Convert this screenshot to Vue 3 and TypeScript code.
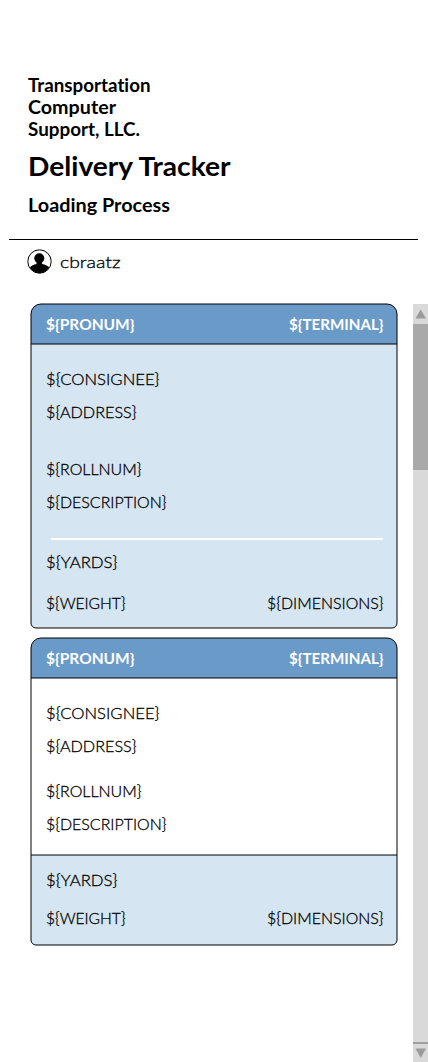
<script setup lang="ts">
import { h } from 'vue'

interface LabelProps {
  text: string
  w: number
}

interface Card {
  id: string
  kind: 'plain' | 'split'
  height: number
  sectionY: number
}

// Fixed-measure text label: 20px tall, baseline at 15px.
const FitLabel = (props: LabelProps) =>
  h('svg', { width: props.w, height: 20, overflow: 'visible', style: 'display:block' }, [
    h(
      'text',
      { x: 0, y: 15, textLength: props.w, lengthAdjust: 'spacingAndGlyphs', fill: 'currentColor' },
      props.text,
    ),
  ])
FitLabel.props = ['text', 'w']

const cards: Card[] = [
  { id: 'first', kind: 'plain', height: 326, sectionY: 0 },
  { id: 'second', kind: 'split', height: 309, sectionY: 218 },
]

function outline(height: number): string {
  const b = height - 1
  return `M1 11a10 10 0 0 1 10-10H357a10 10 0 0 1 10 10V${b - 5}a5 5 0 0 1-5 5H6a5 5 0 0 1-5-5Z`
}

function section(y: number, height: number): string {
  const b = height - 1
  return `M1 ${y}H367V${b - 5}a5 5 0 0 1-5 5H6a5 5 0 0 1-5-5Z`
}
</script>

<template>
  <div class="page">
    <header class="top">
      <FitLabel class="brand" text="Transportation" :w="122.5" />
      <FitLabel class="brand" text="Computer" :w="88" />
      <FitLabel class="brand" text="Support, LLC." :w="112" />
      <FitLabel class="title" text="Delivery Tracker" :w="202.5" />
      <FitLabel class="brand process" text="Loading Process" :w="142" />
    </header>
    <div class="rule"></div>
    <div class="user">
      <svg width="26" height="26" viewBox="0 0 26 26">
        <circle cx="12.5" cy="12.5" r="11.7" fill="#fff" stroke="#000" />
        <circle cx="12.3" cy="9.3" r="5" />
        <path d="M9.5 12h5.600v3c2.800.6 5.500 1.700 7 3.300-2 3.700-5.500 5.900-9.600 5.900S5 22 3 18.300c1.300-1.600 3.800-2.700 6.500-3.300Z" />
      </svg>
      <FitLabel class="name" text="cbraatz" :w="60.5" />
    </div>

    <main class="content">
      <div class="cards">
        <article v-for="c in cards" :key="c.id" class="card" :class="c.kind">
          <svg class="frame" width="368" :height="c.height">
            <path :d="outline(c.height)" :fill="c.kind === 'plain' ? '#d5e5f1' : '#fff'" />
            <path v-if="c.sectionY" :d="section(c.sectionY, c.height)" fill="#d5e5f1" />
            <path d="M1 41V11a10 10 0 0 1 10-10H357a10 10 0 0 1 10 10V41Z" fill="#6a9ac8" />
            <path :d="outline(c.height)" fill="none" stroke="#000" />
            <path d="M1 41H367" stroke="#000" />
            <path v-if="c.sectionY" :d="`M1 ${c.sectionY}H367`" stroke="#000" />
          </svg>
          <div class="row head">
            <FitLabel text="${PRONUM}" :w="88.5" />
            <FitLabel text="${TERMINAL}" :w="94.5" />
          </div>
          <FitLabel class="consignee" text="${CONSIGNEE}" :w="113.5" />
          <FitLabel class="address" text="${ADDRESS}" :w="90.5" />
          <FitLabel class="roll" text="${ROLLNUM}" :w="95.5" />
          <FitLabel class="desc" text="${DESCRIPTION}" :w="120.5" />
          <div v-if="c.kind === 'plain'" class="divider"></div>
          <FitLabel class="yards" text="${YARDS}" :w="71.5" />
          <div class="row weight">
            <FitLabel text="${WEIGHT}" :w="79.5" />
            <FitLabel text="${DIMENSIONS}" :w="116.5" />
          </div>
        </article>
      </div>
      <aside class="scrollbar">
        <div class="button">
          <svg width="15" height="20"><path d="M7.7 5.5 13 14.5H2.500Z" fill="#9b9b9b" /></svg>
        </div>
        <div class="thumb"></div>
        <div class="button down">
          <svg width="15" height="18"><path d="M2.5 4.5H13L7.700 14Z" fill="#9b9b9b" /></svg>
        </div>
      </aside>
    </main>
  </div>
</template>

<style>
body {
  margin: 0;
  background: #fff;
}
</style>

<style scoped>
.page {
  width: 428px;
  height: 1062px;
  overflow: hidden;
  display: flex;
  flex-direction: column;
  background: #fff;
  color: #000;
  font-family: Lato, 'Liberation Sans', sans-serif;
  font-size: 16px;
  font-weight: 300;
  font-variant-ligatures: none;
}
.top {
  box-sizing: border-box;
  height: 239px;
  padding: 77px 0 0 28px;
}
.brand {
  font-size: 18px;
  font-weight: 700;
  margin-bottom: 2px;
}
.title {
  font-size: 26px;
  font-weight: 700;
  margin-top: 20px;
}
.process {
  margin-top: 16px;
}
.rule {
  height: 1px;
  width: 409px;
  margin-left: 9px;
  background: #000;
}
.user {
  display: flex;
  height: 63px;
  box-sizing: border-box;
  padding: 9px 0 0 27px;
}
.name {
  margin: 4px 0 0 7px;
}
.name,
.card > svg:not(.frame),
.weight svg {
  stroke: currentColor;
  stroke-width: 0.3px;
}
.content {
  display: flex;
  justify-content: space-between;
  height: 759px;
  flex: none;
}
.cards {
  display: flex;
  flex-direction: column;
  gap: 8px;
  padding-left: 30px;
}
.card {
  position: relative;
  box-sizing: border-box;
  width: 368px;
  padding: 12px 15px 0 16px;
}
.plain {
  height: 326px;
}
.split {
  height: 309px;
}
.card > * {
  position: relative;
}
.card > .frame {
  position: absolute;
  left: 0;
  top: 0;
}
.row {
  display: flex;
  justify-content: space-between;
}
.head {
  color: #fff;
  font-weight: 700;
}
.consignee {
  margin-top: 35px;
}
.address,
.desc {
  margin-top: 13px;
}
.plain .roll {
  margin-top: 37px;
}
.split .roll {
  margin-top: 25px;
}
.divider {
  height: 2px;
  margin: 25px 0 0 5px;
  background: #fff;
}
.plain .yards {
  margin-top: 13px;
}
.split .yards {
  margin-top: 36px;
}
.plain .weight {
  margin-top: 21px;
}
.split .weight {
  margin-top: 18px;
}
.scrollbar {
  display: flex;
  flex-direction: column;
  width: 15px;
  height: 758px;
  margin-top: 1px;
  background: #d9d9d9;
}
.button {
  height: 20px;
}
.thumb {
  height: 146px;
  background: #a9a9a9;
}
.down {
  height: 18px;
  margin-top: auto;
  border-top: 2px solid #a0a0a0;
}
</style>
